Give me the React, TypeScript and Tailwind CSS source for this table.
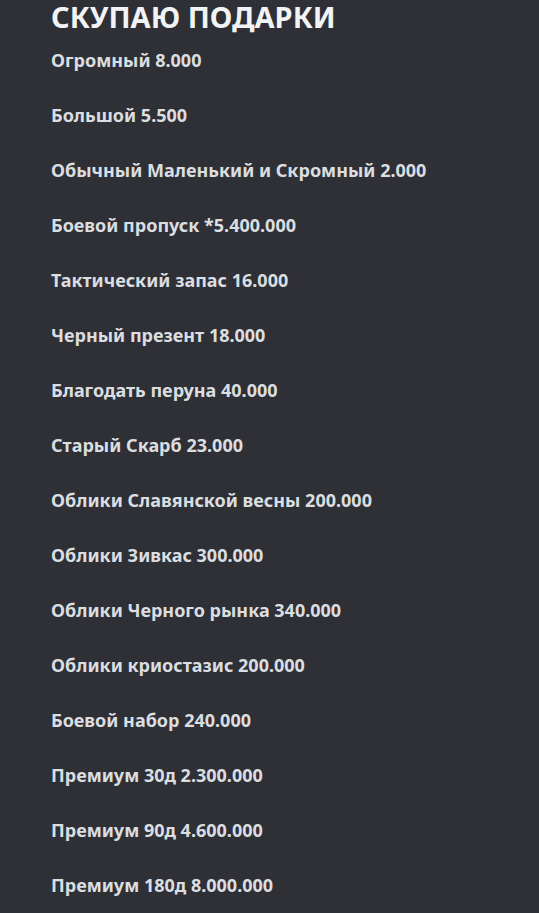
const items = [
  "Огромный 8.000",
  "Большой 5.500",
  "Обычный Маленький и Скромный 2.000",
  "Боевой пропуск *5.400.000",
  "Тактический запас 16.000",
  "Черный презент 18.000",
  "Благодать перуна 40.000",
  "Старый Скарб 23.000",
  "Облики Славянской весны 200.000",
  "Облики Зивкас 300.000",
  "Облики Черного рынка 340.000",
  "Облики криостазис 200.000",
  "Боевой набор 240.000",
  "Премиум 30д 2.300.000",
  "Премиум 90д 4.600.000",
  "Премиум 180д 8.000.000",
];

export default function App() {
  return (
    <div className="min-h-[913px] w-full bg-[#2e3035] pl-[51px] font-['Noto_Sans',sans-serif] overflow-hidden">
      {/* header */}
      <div className="h-[33px] flex items-center">
        <h1 className="text-[29px] font-bold leading-[33px] text-[#f2f3f5]">СКУПАЮ ПОДАРКИ</h1>
      </div>

      <div className="flex flex-col">
        {items.map((t) => (
          <div key={t} className="h-[55px] flex items-center text-[18px] font-bold text-[#dbdee1]">
            {t}
          </div>
        ))}
      </div>
    </div>
  );
}
